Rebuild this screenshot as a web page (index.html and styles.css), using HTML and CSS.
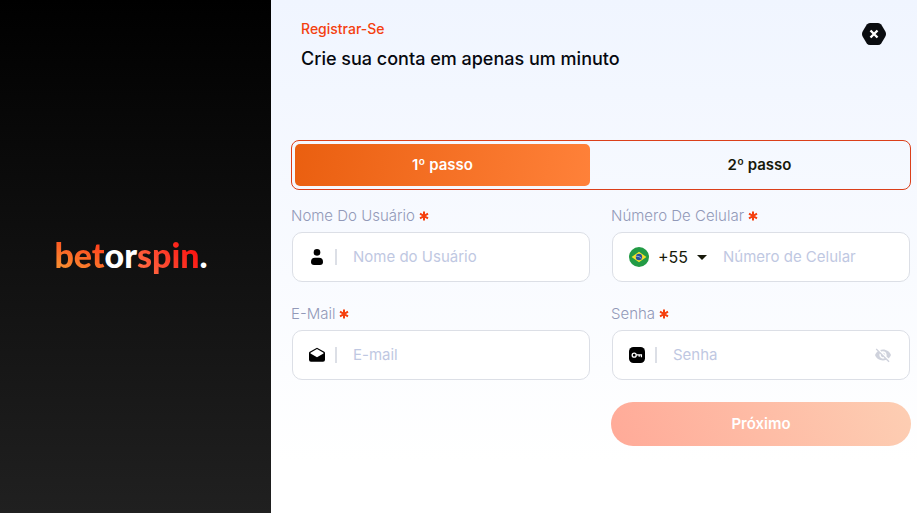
FILE: index.html
```html
<!DOCTYPE html>
<html lang="pt-BR">
<head>
  <meta charset="UTF-8">
  <meta name="viewport" content="width=device-width">
  <title>Registrar-Se</title>
  <link rel="stylesheet" href="styles.css">
</head>

<body>

<aside class="brand">
  <div class="logo"><span class="bet">bet</span><span class="or">or</span><span class="spin">spin</span><span class="or">.</span></div>
</aside>

<main class="panel">
  <header class="top">
    <div>
      <h1>Registrar-Se</h1>
      <p>Crie sua conta em apenas um minuto</p>
    </div>
    <button class="close" type="button" aria-label="Fechar">
      <svg width="24" height="24" viewBox="0 0 24 24">
        <path d="M8 1h8q2 0 3.200 1.600l3.900 6.400q1.800 3 0 6l-3.900 6.400Q18 23 16 23H8q-2 0-3.200-1.600L.9 15q-1.800-3 0-6l3.900-6.400Q6 1 8 1z" fill="#0a0c10"/>
        <path d="M8.500 8.500l7 7M15.500 8.500l-7 7" stroke="#fff" stroke-width="2.400"/>
      </svg>
    </button>
  </header>

  <form class="form">
    <div class="steps">
      <button class="step active" type="button">1º passo</button>
      <button class="step" type="button">2º passo</button>
    </div>

    <div class="fields">
      <div class="field">
        <label for="user">Nome Do Usuário <svg class="req" width="10" height="10" viewBox="0 0 10 10"><path d="M5 0.500v9M1 2.700l8 4.600M9 2.700l-8 4.600"/></svg></label>
        <div class="box">
          <svg class="icon" width="16" height="16" viewBox="0 0 16 16">
            <circle cx="8" cy="3.400" r="3.300"/>
            <path d="M6 8.700h4q4 0 4 4 0 3.300-3 3.300H5q-3 0-3-3.300 0-4 4-4z"/>
          </svg>
          <span class="bar"></span>
          <input id="user" type="text" placeholder="Nome do Usuário">
        </div>
      </div>

      <div class="field">
        <label for="phone">Número De Celular <svg class="req" width="10" height="10" viewBox="0 0 10 10"><path d="M5 0.500v9M1 2.700l8 4.600M9 2.700l-8 4.600"/></svg></label>
        <div class="box">
          <button class="country" type="button" aria-label="Código do país">
            <svg width="20" height="20" viewBox="0 0 20 20">
              <circle cx="10" cy="10" r="10" fill="#229b45"/>
              <path d="M10 4.800l7.400 5.200-7.400 5.200L2.600 10z" fill="#f3e02c"/>
              <circle cx="10" cy="10" r="3.200" fill="#28509c"/>
              <path d="M7 9.200q3.400-.3 5.500 2.200" fill="none" stroke="#b9cbe2" stroke-width=".7"/>
            </svg>
            <span>+55</span>
            <svg width="10" height="5" viewBox="0 0 10 5"><path d="M0 0h10L5 5z" fill="#17190a"/></svg>
          </button>
          <input id="phone" type="tel" placeholder="Número de Celular">
        </div>
      </div>

      <div class="field">
        <label for="email">E-Mail <svg class="req" width="10" height="10" viewBox="0 0 10 10"><path d="M5 0.500v9M1 2.700l8 4.600M9 2.700l-8 4.600"/></svg></label>
        <div class="box">
          <svg class="icon" width="16" height="16" viewBox="0 0 16 16">
            <path fill-rule="evenodd" d="M8 .800l7.300 3.900q.7.400.7 1.200v6.900q0 2-2 2H2q-2 0-2-2V5.900q0-.8.7-1.200zM8 2.100L1.500 5.700v.9L8 10.200l6.500-3.600v-.9z"/>
          </svg>
          <span class="bar"></span>
          <input id="email" type="email" placeholder="E-mail">
        </div>
      </div>

      <div class="field">
        <label for="pass">Senha <svg class="req" width="10" height="10" viewBox="0 0 10 10"><path d="M5 0.500v9M1 2.700l8 4.600M9 2.700l-8 4.600"/></svg></label>
        <div class="box">
          <svg class="icon" width="16" height="16" viewBox="0 0 16 16">
            <rect width="16" height="16" rx="4.500"/>
            <circle cx="5.200" cy="8.200" r="2" fill="none" stroke="#fff" stroke-width="1.300"/>
            <path d="M7.200 7.800h5.200v2.400M10.200 7.800v1.900" fill="none" stroke="#fff" stroke-width="1.300"/>
          </svg>
          <span class="bar"></span>
          <input id="pass" type="password" placeholder="Senha">
          <button class="eye" type="button" aria-label="Mostrar senha">
            <svg width="18" height="16" viewBox="0 1 24 22" fill="#cfd2dc">
              <path d="M12 7c2.760 0 5 2.240 5 5 0 .65-.13 1.260-.36 1.830l2.920 2.920c1.510-1.260 2.700-2.890 3.430-4.750-1.730-4.390-6-7.500-11-7.500-1.400 0-2.740.25-3.980.7l2.160 2.160C10.740 7.130 11.350 7 12 7zM2 4.270l2.280 2.280.46.46C3.080 8.300 1.780 10.020 1 12c1.730 4.390 6 7.500 11 7.500 1.550 0 3.030-.3 4.380-.84l.42.42L19.730 22 21 20.730 3.270 3 2 4.270zM7.530 9.800l1.550 1.550c-.05.21-.08.43-.08.65 0 1.660 1.340 3 3 3 .22 0 .44-.03.65-.08l1.550 1.550c-.67.33-1.410.53-2.200.53-2.760 0-5-2.240-5-5 0-.79.2-1.530.53-2.200zm4.310-.78l3.150 3.150.02-.16c0-1.660-1.340-3-3-3l-.17.01z"/>
            </svg>
          </button>
        </div>
      </div>

      <button class="next" type="submit" disabled>Próximo</button>
    </div>
  </form>
</main>

</body>
</html>
```
FILE: styles.css
```css
* { box-sizing: border-box; }
body {
  display: flex;
  min-height: 100vh;
  margin: 0;
}
body, input, button {
  font: 16px/20px Inter, "Liberation Sans", sans-serif;
}
h1, p { margin: 0; }
button {
  padding: 0;
  border: 0;
  background: none;
  cursor: pointer;
}
svg { display: block; flex: none; }

.brand {
  display: flex;
  flex: none;
  align-items: center;
  justify-content: center;
  width: 271px;
  padding: 0 9px 4px 0;
  background: linear-gradient(#000, #202020);
}
.logo {
  font: 900 34px/40px Lato, sans-serif;
}
.bet, .spin {
  color: transparent;
  -webkit-background-clip: text;
  background-clip: text;
}
.bet { background-image: linear-gradient(20deg, #f98a30 20%, #ff3f1c 80%); }
.spin { background-image: linear-gradient(50deg, #ff6a42 10%, #fb1512 80%); }
.or { color: #fff; }

.panel {
  flex: 1;
  min-width: 0;
  padding: 19px 6px 20px 20px;
  background: linear-gradient(#f0f5ff, #fff 90%);
}
.top {
  display: flex;
  justify-content: space-between;
  align-items: flex-start;
  padding: 0 25px 0 10px;
}
.top h1 {
  color: #f4400f;
  font-size: 14px;
  font-weight: 500;
  line-height: 20px;
}
.top p {
  margin-top: 6px;
  color: #06080f;
  font-size: 18px;
  font-weight: 500;
  line-height: 28px;
}
.close { margin-top: 3px; }

.form { margin-top: 67px; }
.steps {
  display: flex;
  gap: 22px;
  padding: 3px;
  border: 1px solid #db3f1a;
  border-radius: 8px;
}
.step {
  flex: 1;
  height: 42px;
  border-radius: 5px;
  color: #17190a;
  font-size: 15px;
  font-weight: 600;
}
.step.active {
  color: #fff;
  background: linear-gradient(100deg, #ea5f10, #ff8139);
}

.fields {
  display: grid;
  grid-template-columns: repeat(2, minmax(0, 1fr));
  gap: 20px;
  padding-top: 16px;
}
.field label {
  display: flex;
  align-items: center;
  gap: 4px;
  color: #9299b8;
  font-size: 15px;
  font-weight: 300;
}
.req {
  stroke: #f5400f;
  stroke-width: 2;
}
.box {
  display: flex;
  align-items: center;
  height: 50px;
  margin: 6px 1px 2px;
  padding: 0 17px 0 16px;
  border: 1px solid #dcdfe6;
  border-radius: 10px;
  background: #fff;
}
.bar {
  width: 2px;
  height: 16px;
  margin: 0 16px 0 10px;
  background: #dcdfe6;
}
.box input {
  flex: 1;
  min-width: 0;
  padding: 0;
  border: 0;
  outline: 0;
  background: none;
  font-size: 15px;
}
.box input::placeholder { color: #bfc8e2; }
.country {
  display: flex;
  align-items: center;
  gap: 9px;
  margin-right: 16px;
  color: #17190a;
}
.next {
  grid-column: 2;
  height: 44px;
  border-radius: 22px;
  color: #fff;
  font-size: 15px;
  font-weight: 600;
  background: linear-gradient(70deg, #ffaa98, #fdceb3);
}
```
